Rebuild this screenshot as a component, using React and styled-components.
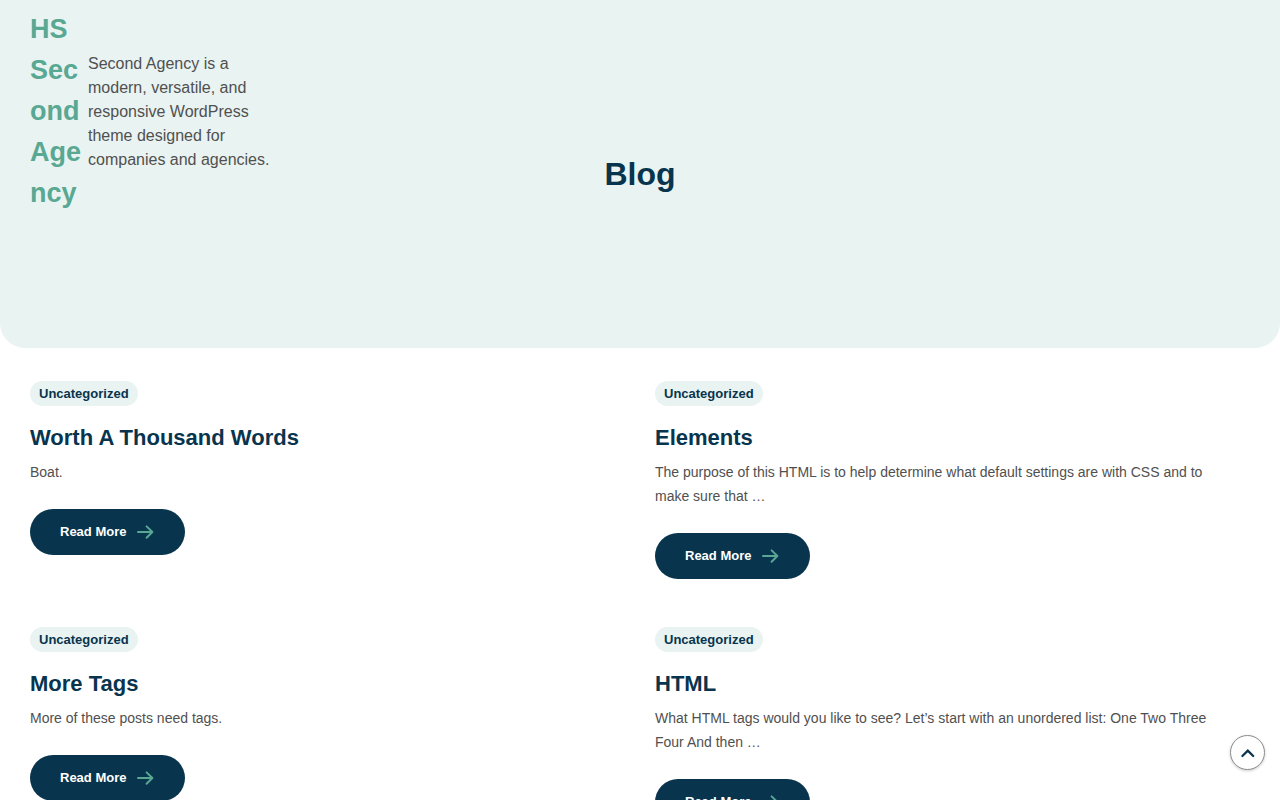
import styled, { createGlobalStyle } from 'styled-components'

const GlobalStyle = createGlobalStyle`
  *, *::before, *::after {
    box-sizing: border-box;
  }
  body {
    margin: 0;
    background: #fff;
    color: #505050;
    font-family: "Liberation Sans", Arial, sans-serif;
    font-size: 16px;
    line-height: 24px;
  }
  h1, h2, p {
    margin: 0;
  }
  a {
    text-decoration: none;
  }
`;

const Header = styled.header`
    display: grid;
    grid-template-columns: 1fr auto 1fr;
    align-items: center;
    min-height: 348px;
    padding: 0 30px;
    background: #e9f3f1;
    border-radius: 0 0 25px 25px;
`;

const Branding = styled.div`
    align-self: start;
    display: flex;
    align-items: center;
    gap: 5px;
    padding-top: 9px;
`;

const SiteTitle = styled.a`
    width: 53px;
    color: #58a893;
    font-size: 27px;
    font-weight: 700;
    line-height: 41px;
    word-break: break-all;
`;

const Tagline = styled.p`
    max-width: 190px;
`;

const PageTitle = styled.h1`
    color: #08344e;
    font-size: 32px;
    line-height: 40px;
`;

const Posts = styled.main`
    display: grid;
    grid-template-columns: 1fr 1fr;
    align-items: start;
    gap: 48px 30px;
    padding: 33px 30px;
`;

const Post = styled.article`
    display: flex;
    flex-direction: column;
    align-items: flex-start;
`;

const Category = styled.a`
    padding: 0 9px;
    border-radius: 20px;
    background: #e9f3f1;
    color: #08344e;
    font-size: 13px;
    font-weight: 700;
    line-height: 25px;
`;

const PostTitle = styled.h2`
    margin: 17px 0 7px;
    font-size: 22px;
    line-height: 30px;
    a {
      color: #08344e;
    }
`;

const Excerpt = styled.p`
    padding-right: 15px;
    font-size: 14px;
`;

const ReadMore = styled.a`
    display: flex;
    align-items: center;
    gap: 9px;
    margin-top: 25px;
    padding: 11px 30px;
    border-radius: 30px;
    background: #08344e;
    color: #fff;
    font-size: 13px;
    font-weight: 700;
    svg {
      color: #58a893;
    }
`;

const ScrollTop = styled.button`
    position: fixed;
    right: 15px;
    bottom: 30px;
    display: flex;
    align-items: center;
    justify-content: center;
    width: 35px;
    height: 35px;
    padding: 0;
    border: 1px solid #8c8c8c;
    border-radius: 50%;
    background: #fff;
    color: #08344e;
    box-shadow: 0 1px 3px rgba(0, 0, 0, 0.2);
    cursor: pointer;
`;

const posts = [
    { title: 'Worth A Thousand Words', excerpt: 'Boat.' },
    { title: 'Elements', excerpt: 'The purpose of this HTML is to help determine what default settings are with CSS and to make sure that …' },
    { title: 'More Tags', excerpt: 'More of these posts need tags.' },
    { title: 'HTML', excerpt: 'What HTML tags would you like to see? Let’s start with an unordered list: One Two Three Four And then …' },
]

function ArrowIcon() {
    return (
        <svg width="20" height="20" viewBox="0 0 20 20" fill="none" stroke="currentColor" strokeWidth="2" strokeLinecap="round" strokeLinejoin="round" aria-hidden="true">
            <path d="M3 10H17.4M11.6 4.4L17.4 10L11.6 15.8"/>
        </svg>
    )
}

function PostItem({post}) {
    return (
        <Post>
            <Category href="#">Uncategorized</Category>
            <PostTitle><a href="#">{post.title}</a></PostTitle>
            <Excerpt>{post.excerpt}</Excerpt>
            <ReadMore href="#">
                Read More
                <ArrowIcon/>
            </ReadMore>
        </Post>
    )
}

export default function App() {
    return (
        <>
            <GlobalStyle/>
            <Header>
                <Branding>
                    <SiteTitle href="#">HS Second Agency</SiteTitle>
                    <Tagline>Second Agency is a modern, versatile, and responsive WordPress theme designed for companies and agencies.</Tagline>
                </Branding>
                <PageTitle>Blog</PageTitle>
            </Header>
            <Posts>
                {posts.map(post => <PostItem key={post.title} post={post}/>)}
            </Posts>
            <ScrollTop type="button" aria-label="Scroll to top" onClick={() => window.scrollTo(0, 0)}>
                <svg width="16" height="16" viewBox="0 0 16 16" fill="none" stroke="currentColor" strokeWidth="2.2" strokeLinecap="round" aria-hidden="true">
                    <path d="M2.4 11L7.8 5.6L13.2 11"/>
                </svg>
            </ScrollTop>
        </>
    )
}
